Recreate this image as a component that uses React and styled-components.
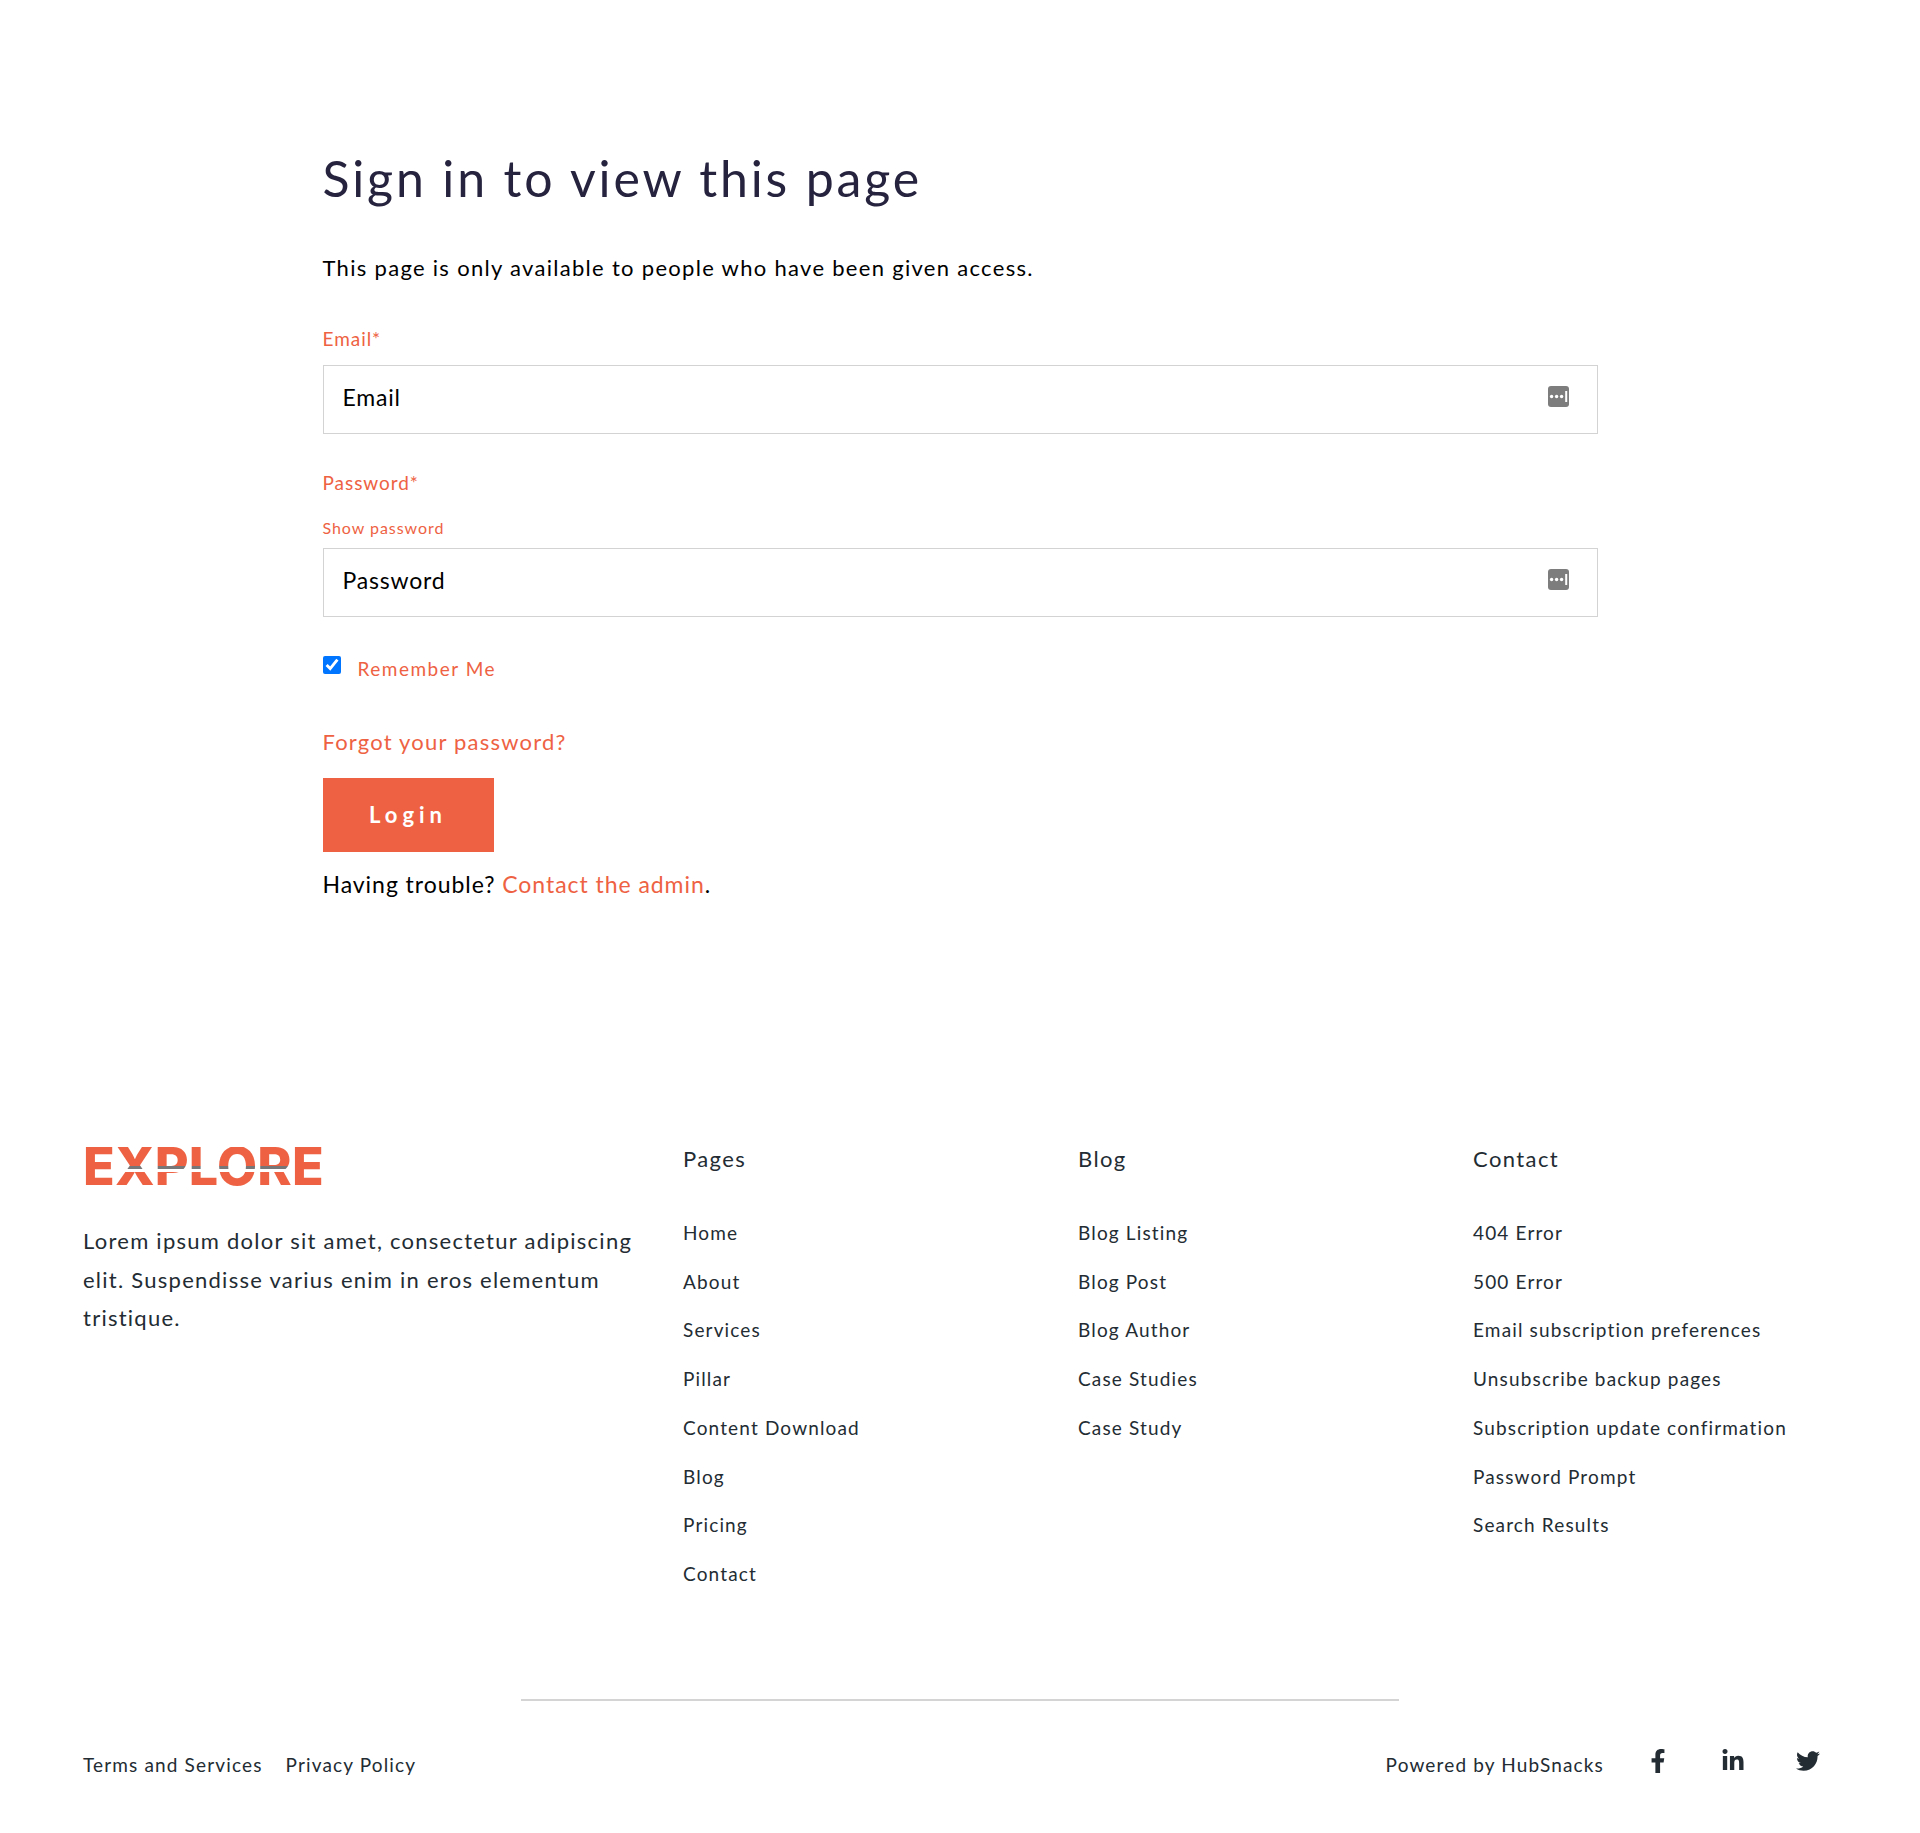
import React from 'react'
import styled, { createGlobalStyle } from 'styled-components'
import { FaFacebookF, FaLinkedinIn, FaTwitter } from 'react-icons/fa'

const GlobalStyle = createGlobalStyle`
  html, body {
    margin: 0;
    padding: 0;
    background: #fff;
    font-family: Lato, "Open Sans", sans-serif;
    color: #000;
  }
  * { box-sizing: border-box; }
`

const coral = '#ee6243'
const ink = '#232c33'

const Page = styled.div`
  width: 1920px;
  height: 1833px;
  overflow: hidden;
`

const Main = styled.main`
  width: 1275px;
  margin: 0 auto;
  padding-top: 142px;
  height: 1147px;
`

const Title = styled.h1`
  margin: 0;
  font-size: 50px;
  font-weight: 400;
  line-height: 72px;
  letter-spacing: 2.85px;
  color: #26233f;
`

const Intro = styled.p`
  margin: 38px 0 0;
  font-size: 22px;
  line-height: 32px;
  letter-spacing: 1.3px;
`

const Label = styled.label`
  display: block;
  margin-top: ${p => p.$top}px;
  font-size: 19px;
  line-height: 26px;
  letter-spacing: 0.95px;
  color: ${coral};
`

const ShowPassword = styled.div`
  margin-top: 21px;
  font-size: 16px;
  line-height: 22px;
  letter-spacing: 0.95px;
  color: ${coral};
`

const InputBox = styled.div`
  height: 69px;
  margin-top: ${p => p.$top}px;
  padding: 0 28px 5px 19px;
  border: 1px solid #d3d3d3;
  display: flex;
  align-items: center;
  justify-content: space-between;
  font-size: 23px;
  letter-spacing: 0.8px;
`

const KeyIcon = styled.svg`
  width: 21px;
  height: 21px;
  margin-top: -2px;
  display: block;
`

const RememberRow = styled.div`
  margin-top: 37px;
  display: flex;
  align-items: flex-start;
  height: 30px;
  font-size: 19px;
  letter-spacing: 1.5px;
  color: ${coral};
`

const Check = styled.input`
  width: 18px;
  height: 18px;
  margin: 2px 17px 0 0;
  accent-color: #0075ff;
`

const RememberText = styled.span`
  line-height: 30px;
`

const Forgot = styled.a`
  display: block;
  margin-top: 43px;
  font-size: 22px;
  line-height: 30px;
  letter-spacing: 1.2px;
  color: ${coral};
`

const LoginButton = styled.button`
  display: block;
  width: 171px;
  height: 74px;
  margin-top: 21px;
  padding-bottom: 2px;
  border: 0;
  background: ${coral};
  color: #fff;
  font: 700 22px Lato, sans-serif;
  letter-spacing: 5px;
`

const Trouble = styled.p`
  margin: 16px 0 0;
  font-size: 23px;
  line-height: 32px;
  letter-spacing: 0.95px;
  a { color: ${coral}; }
`

const Footer = styled.footer`
  padding: 0 83px;
`

const FooterTop = styled.div`
  display: grid;
  grid-template-columns: 600px 395px 395px 1fr;
  height: 552px;
`

const Logo = styled.div`
  height: 40px;
  font: 800 52px/40px Inter, sans-serif;
  letter-spacing: 0.2px;
  color: ${coral};
  white-space: nowrap;
`

// the cut through the middle letters only shows inside the glyphs
const LogoCut = styled.span`
  display: inline-block;
  height: 40px;
  color: transparent;
  background: linear-gradient(
    to bottom,
    ${coral} 0 19px,
    #77777a 19px 22px,
    #fff 22px 25px,
    ${coral} 25px 40px
  );
  -webkit-background-clip: text;
  background-clip: text;
`

const Blurb = styled.p`
  margin: 35px 0 0;
  width: 560px;
  font-size: 22px;
  line-height: 38.6px;
  letter-spacing: 1.25px;
  color: ${ink};
`

const ColHead = styled.h4`
  margin: 0;
  font-size: 22px;
  font-weight: 400;
  line-height: 24px;
  letter-spacing: 1.4px;
  color: ${ink};
`

const LinkList = styled.ul`
  list-style: none;
  margin: 38px 0 0;
  padding: 0;
`

const LinkItem = styled.li`
  font-size: 19px;
  line-height: 48.7px;
  letter-spacing: 1.15px;
  color: ${ink};
`

const Divider = styled.hr`
  width: 878px;
  margin: 0 auto;
  border: 0;
  border-top: 2px solid #d4d4d4;
`

const Bottom = styled.div`
  display: flex;
  justify-content: space-between;
  align-items: center;
  height: 127px;
  padding-right: 14px;
  font-size: 19px;
  letter-spacing: 1.15px;
  color: ${ink};
`

const LegalLinks = styled.div`
  display: flex;
  gap: 23px;
`

const Social = styled.div`
  display: flex;
  align-items: center;
`

const Powered = styled.span`
  margin-right: 39px;
`

const SocialIcon = styled.span`
  width: 30px;
  margin-left: ${p => p.$gap}px;
  display: flex;
  justify-content: center;
  font-size: 24px;
  margin-top: -8px;
`

function PasswordKeyIcon() {
  return (
    <KeyIcon viewBox="0 0 21 21">
      <rect width="21" height="21" rx="3" fill="#7d7d7d" />
      <circle cx="3.6" cy="10.5" r="1.7" fill="#fff" />
      <circle cx="8.6" cy="10.5" r="1.7" fill="#fff" />
      <circle cx="13.6" cy="10.5" r="1.7" fill="#fff" />
      <rect x="17.2" y="5" width="2" height="11" fill="#fff" />
    </KeyIcon>
  )
}

const columns = [
  { title: 'Pages', links: ['Home', 'About', 'Services', 'Pillar', 'Content Download', 'Blog', 'Pricing', 'Contact'] },
  { title: 'Blog', links: ['Blog Listing', 'Blog Post', 'Blog Author', 'Case Studies', 'Case Study'] },
  { title: 'Contact', links: ['404 Error', '500 Error', 'Email subscription preferences', 'Unsubscribe backup pages', 'Subscription update confirmation', 'Password Prompt', 'Search Results'] },
]

export default function App() {
  return (
    <Page>
      <GlobalStyle />
      <Main>
        <Title>Sign in to view this page</Title>
        <Intro>This page is only available to people who have been given access.</Intro>
        <Label $top={42}>Email*</Label>
        <InputBox $top={13}>
          Email
          <PasswordKeyIcon />
        </InputBox>
        <Label $top={36}>Password*</Label>
        <ShowPassword>Show password</ShowPassword>
        <InputBox $top={9}>
          Password
          <PasswordKeyIcon />
        </InputBox>
        <RememberRow>
          <Check type="checkbox" defaultChecked />
          <RememberText>Remember Me</RememberText>
        </RememberRow>
        <Forgot>Forgot your password?</Forgot>
        <LoginButton>Login</LoginButton>
        <Trouble>
          Having trouble? <a>Contact the admin</a>.
        </Trouble>
      </Main>
      <Footer>
        <FooterTop>
          <div>
            <Logo>E<LogoCut>XPLOR</LogoCut>E</Logo>
            <Blurb>Lorem ipsum dolor sit amet, consectetur adipiscing elit. Suspendisse varius enim in eros elementum tristique.</Blurb>
          </div>
          {columns.map(col => (
            <div key={col.title}>
              <ColHead>{col.title}</ColHead>
              <LinkList>
                {col.links.map(link => (
                  <LinkItem key={link}>{link}</LinkItem>
                ))}
              </LinkList>
            </div>
          ))}
        </FooterTop>
        <Divider />
        <Bottom>
          <LegalLinks>
            <span>Terms and Services</span>
            <span>Privacy Policy</span>
          </LegalLinks>
          <Social>
            <Powered>Powered by HubSnacks</Powered>
            <SocialIcon $gap={0}><FaFacebookF /></SocialIcon>
            <SocialIcon $gap={45}><FaLinkedinIn /></SocialIcon>
            <SocialIcon $gap={45}><FaTwitter /></SocialIcon>
          </Social>
        </Bottom>
      </Footer>
    </Page>
  )
}
